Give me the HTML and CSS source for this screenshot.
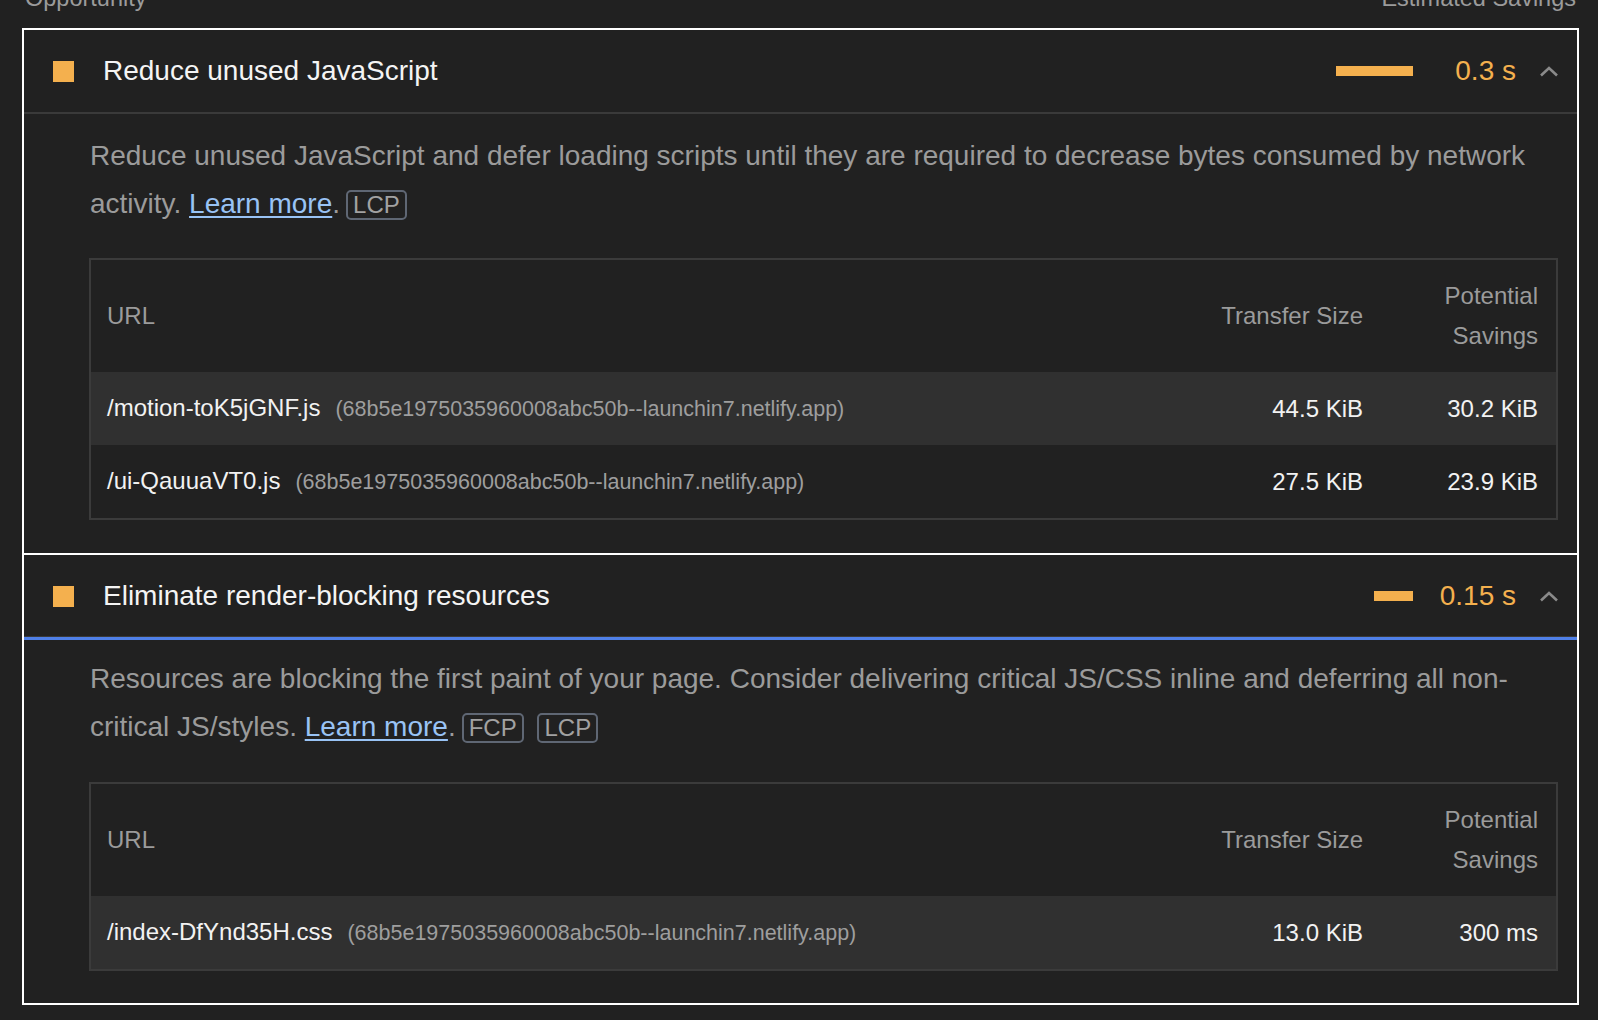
FILE: index.html
```html
<!DOCTYPE html>
<html lang="en">
<head>
<meta charset="utf-8">
<title>Opportunities</title>
<link rel="stylesheet" href="styles.css">
</head>
<body>
<div class="page">
  <div class="colhead">
    <span>Opportunity</span>
    <span>Estimated Savings</span>
  </div>
  <div class="group">
    <section class="audit">
      <div class="audit-header">
        <span class="score-icon"></span>
        <span class="audit-title">Reduce unused JavaScript</span>
        <span class="sparkline"><span class="bar" style="width:77px"></span></span>
        <span class="display-value">0.3 s</span>
        <svg class="chevron" width="20" height="11" viewBox="0 0 20 11"><polyline points="2,9.5 10,2 18,9.5" fill="none" stroke="#8a8a8a" stroke-width="2.6"/></svg>
      </div>
      <div class="audit-details">
        <p class="description">Reduce unused JavaScript and defer loading scripts until they are required to decrease bytes consumed by network activity. <a href="#" class="link">Learn more</a>.<span class="adorn">LCP</span></p>
        <div class="table-wrap">
          <table class="details-table">
            <colgroup><col><col class="col-size"><col class="col-save"></colgroup>
            <thead>
              <tr><th class="c-url">URL</th><th class="c-num">Transfer Size</th><th class="c-num">Potential Savings</th></tr>
            </thead>
            <tbody>
              <tr class="hl"><td class="c-url"><span class="url">/motion-toK5jGNF.js</span><span class="host">(68b5e1975035960008abc50b--launchin7.netlify.app)</span></td><td class="c-num">44.5 KiB</td><td class="c-num">30.2 KiB</td></tr>
              <tr><td class="c-url"><span class="url">/ui-QauuaVT0.js</span><span class="host">(68b5e1975035960008abc50b--launchin7.netlify.app)</span></td><td class="c-num">27.5 KiB</td><td class="c-num">23.9 KiB</td></tr>
            </tbody>
          </table>
        </div>
      </div>
    </section>
    <section class="audit audit--focus">
      <div class="audit-header">
        <span class="score-icon"></span>
        <span class="audit-title">Eliminate render-blocking resources</span>
        <span class="sparkline"><span class="bar" style="width:39px"></span></span>
        <span class="display-value">0.15 s</span>
        <svg class="chevron" width="20" height="11" viewBox="0 0 20 11"><polyline points="2,9.5 10,2 18,9.5" fill="none" stroke="#8a8a8a" stroke-width="2.6"/></svg>
      </div>
      <div class="audit-details">
        <p class="description">Resources are blocking the first paint of your page. Consider delivering critical JS/CSS inline and deferring all non-critical JS/styles. <a href="#" class="link">Learn more</a>.<span class="adorn">FCP</span> <span class="adorn">LCP</span></p>
        <div class="table-wrap">
          <table class="details-table">
            <colgroup><col><col class="col-size"><col class="col-save"></colgroup>
            <thead>
              <tr><th class="c-url">URL</th><th class="c-num">Transfer Size</th><th class="c-num">Potential Savings</th></tr>
            </thead>
            <tbody>
              <tr class="hl"><td class="c-url"><span class="url">/index-DfYnd35H.css</span><span class="host">(68b5e1975035960008abc50b--launchin7.netlify.app)</span></td><td class="c-num">13.0 KiB</td><td class="c-num">300 ms</td></tr>
            </tbody>
          </table>
        </div>
      </div>
    </section>
  </div>
</div>
</body>
</html>
```
FILE: styles.css
```css
* { box-sizing: border-box; }

html, body {
  margin: 0;
  padding: 0;
  background: #212121;
  overflow: hidden;
}

body {
  font-family: "Liberation Sans", Arial, Helvetica, sans-serif;
  color: #f0f0f0;
}

.page {
  padding: 0 19px 0 22px;
}

.colhead {
  display: flex;
  justify-content: space-between;
  margin-top: -16px;
  margin-bottom: 16px;
  padding: 0 3px 0 3px;
  height: 28px;
  font-size: 23.5px;
  line-height: 28px;
  color: #9b9b9b;
}

.group {
  border: 2px solid #ffffff;
}

.audit + .audit {
  border-top: 2px solid #ffffff;
}

.audit-header {
  display: flex;
  align-items: center;
  height: 82px;
  box-sizing: content-box;
  padding: 0 18px 0 29px;
  border-bottom: 2px solid #3a3a3a;
}

.audit--focus .audit-header {
  border-bottom: 3px solid #4f80e8;
  box-shadow: inset 0 -1px 0 #3a3a3a;
}

.score-icon {
  width: 21px;
  height: 21px;
  background: #f4b04e;
  margin-right: 29px;
  flex: none;
}

.audit-title {
  flex: 1;
  font-size: 28px;
  color: #f4f4f4;
  white-space: nowrap;
}

.sparkline {
  display: flex;
  justify-content: flex-end;
  width: 120px;
}

.bar {
  display: block;
  height: 10px;
  background: #f4b04e;
}

.display-value {
  width: 103px;
  text-align: right;
  font-size: 28px;
  color: #f4b04e;
}

.chevron {
  margin-left: 23px;
  display: block;
  flex: none;
}

.audit-details {
  padding: 18px 19px 33px 65px;
}

.audit--focus .audit-details {
  padding-top: 15px;
}

.audit:last-child .audit-details {
  padding-bottom: 32px;
}

.description {
  margin: 0;
  font-size: 28px;
  line-height: 48px;
  color: #9b9b9b;
  padding-left: 1px;
}

.link {
  color: #99c3f5;
  text-decoration: underline;
  text-underline-offset: 3px;
  text-decoration-thickness: 2px;
}

.adorn {
  display: inline-block;
  margin-left: 6px;
  padding: 0 5px;
  border: 2px solid #5f6774;
  border-radius: 5px;
  font-size: 24px;
  line-height: 26px;
  color: #a2a2a2;
  vertical-align: 0;
}

.table-wrap {
  margin-top: 30px;
  border: 2px solid #3b3b3b;
}

.audit--focus .table-wrap {
  margin-top: 31px;
}

.details-table {
  width: 100%;
  border-collapse: collapse;
  table-layout: fixed;
  font-size: 24px;
  line-height: 40px;
}

.col-size { width: 260px; }
.col-save { width: 175px; }

.details-table th,
.details-table td {
  padding: 16px 18px;
  vertical-align: middle;
  font-weight: normal;
}

.details-table th {
  color: #9b9b9b;
}

.details-table td {
  color: #f2f2f2;
}

.details-table .c-url {
  text-align: left;
  padding-left: 16px;
  white-space: nowrap;
  overflow: hidden;
}

.details-table .c-num {
  text-align: right;
}

.details-table tr.hl td {
  background: #303030;
}

.url {
  color: #f2f2f2;
}

.host {
  margin-left: 15px;
  font-size: 21.5px;
  color: #9e9e9e;
}
```
